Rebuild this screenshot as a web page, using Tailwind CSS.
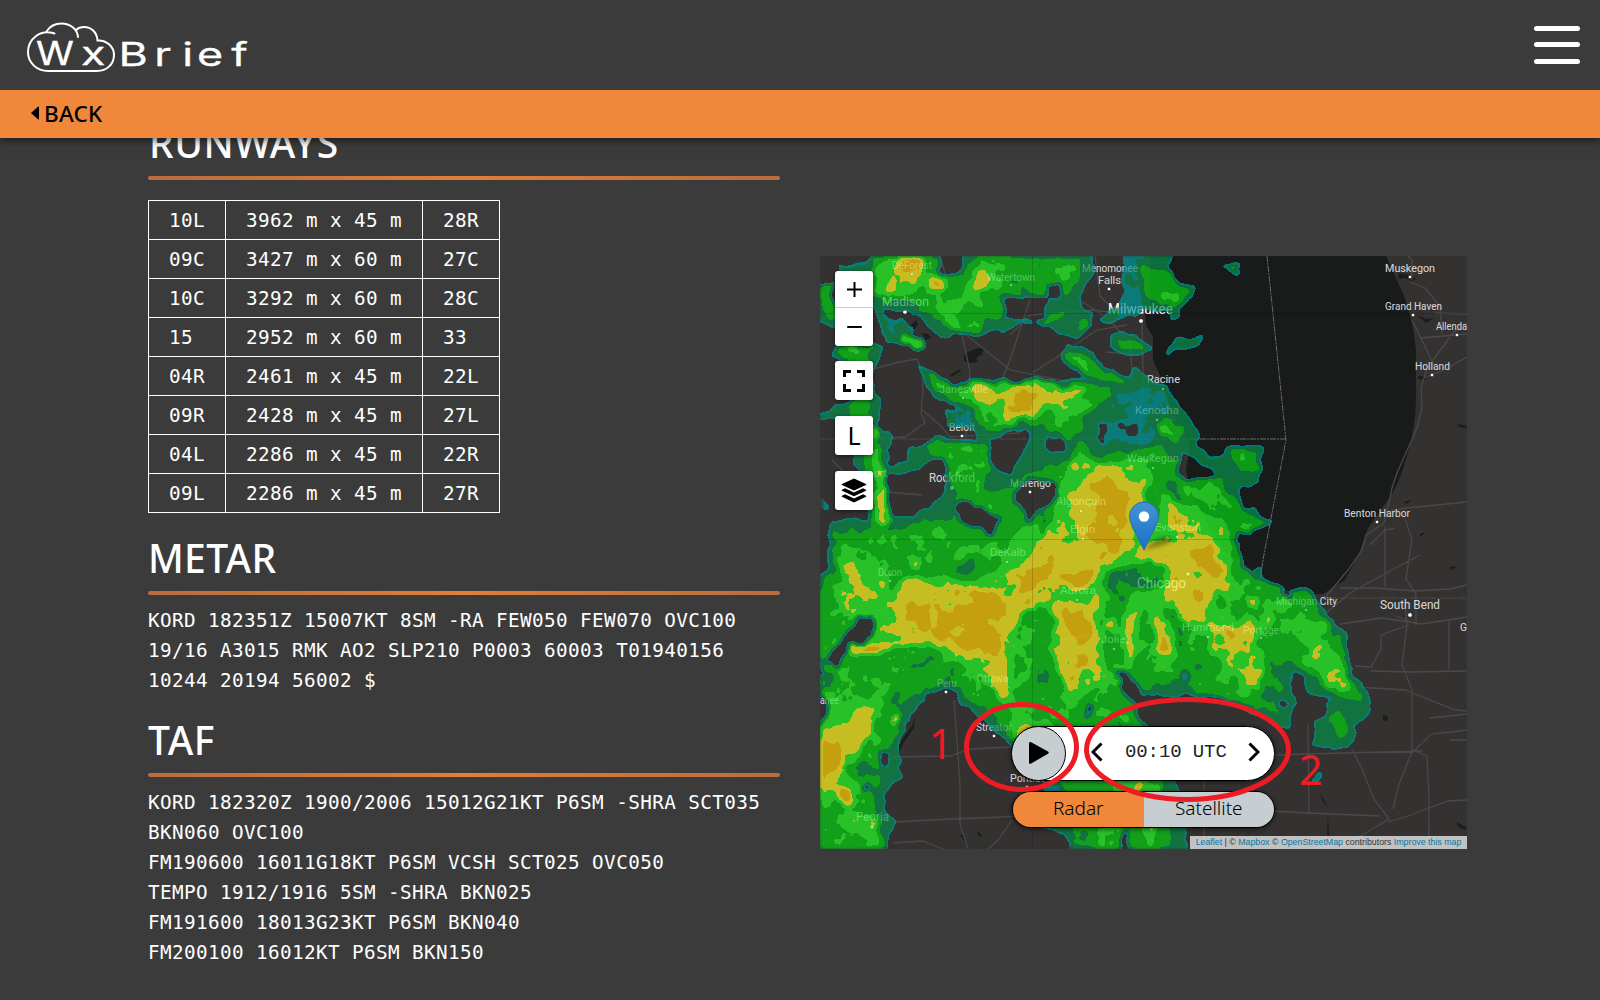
<!DOCTYPE html>
<html lang="en">
<head>
<meta charset="utf-8">
<title>WxBrief</title>
<script src="https://cdn.jsdelivr.net/npm/@tailwindcss/browser@4"></script>
</head>
<body class="h-[1000px] overflow-hidden bg-[#3b3b3b] font-['Noto_Sans',sans-serif] text-white flex flex-col">
<header class="relative z-10 shrink-0 shadow-[0_3px_8px_rgba(0,0,0,0.55)]">
  <div class="h-[90px] bg-[#3b3b3b] flex items-center justify-between pr-5">
    <svg width="260" height="90" viewBox="0 0 260 90" fill="none" stroke="#fff" stroke-width="2" stroke-linecap="round">
      <path d="M54.500 33.500C40 29 28 39 28 52C28 63 37 71 48 71H97C107 71 114 64 114 55C114 47 107 40 97.500 40.500C97 32 91 27 84 27C81 27 78 28 76 30M46.500 31.500C50 26 56 23.500 61.500 23.500C70 23.500 77.500 29 78 37"/>
      <g fill="#fff" stroke="#fff" stroke-width=".3" font-family="Inter, sans-serif" font-size="32">
        <text transform="translate(36 65) scale(1.2 1)" x="0">W</text>
        <text transform="translate(81 65) scale(1.4 1)" x="0">x</text>
        <text transform="translate(118.500 65.500) scale(1.4 1)" x="0 25.500 45.500 56 80.500">Brief</text>
      </g>
    </svg>
    <div class="flex flex-col gap-[11.500px] -mt-px">
      <span class="w-[46px] h-[5px] rounded-full bg-white"></span>
      <span class="w-[46px] h-[5px] rounded-full bg-white"></span>
      <span class="w-[46px] h-[5px] rounded-full bg-white"></span>
    </div>
  </div>
  <div class="h-12 bg-[#f0873a] text-black flex items-center gap-[5px] pl-[31px]">
    <svg width="8" height="14" viewBox="0 0 8 14" class="-mt-0.5"><path d="M8 .8V13.200Q7.500 13.600 7 13.200L.5 7.500Q0 7 .5 6.500L7 .8Q7.500 .4 8 .8Z"/></svg>
    <span class="text-[22.500px] font-medium tracking-[0.2px] leading-none">BACK</span>
  </div>
</header>

<main class="flex pl-[148px]">
  <section class="w-[632px] shrink-0">
    <h2 class="h-[38px] -mt-0.5 flex items-end text-[39px] font-medium leading-[56px] tracking-[0.5px]"><span class="h-[59px] pl-px">RUNWAYS</span></h2>
    <div class="mt-0.5 h-1 rounded-full bg-linear-to-r from-[#b86d3c] via-[#e27e38] to-[#b86d3c]"></div>
    <table class="mt-5 border-collapse font-['DejaVu_Sans_Mono',monospace] text-[19.300px] tracking-[0.390px] leading-[30px] [&_td]:border [&_td]:border-white [&_td]:px-5 [&_td]:pt-[5px] [&_td]:pb-[3px] [&_td]:h-[39px]">
      <tr><td>10L</td><td>3962 m x 45 m</td><td>28R</td></tr>
      <tr><td>09C</td><td>3427 m x 60 m</td><td>27C</td></tr>
      <tr><td>10C</td><td>3292 m x 60 m</td><td>28C</td></tr>
      <tr><td>15</td><td>2952 m x 60 m</td><td>33</td></tr>
      <tr><td>04R</td><td>2461 m x 45 m</td><td>22L</td></tr>
      <tr><td>09R</td><td>2428 m x 45 m</td><td>27L</td></tr>
      <tr><td>04L</td><td>2286 m x 45 m</td><td>22R</td></tr>
      <tr><td>09L</td><td>2286 m x 45 m</td><td>27R</td></tr>
    </table>
    <h2 class="mt-[18px] h-[60px] text-[39px] font-medium leading-[53px] tracking-[0.3px]">METAR</h2>
    <div class="h-1 rounded-full bg-linear-to-r from-[#b86d3c] via-[#e27e38] to-[#b86d3c]"></div>
    <p class="mt-[11px] font-['DejaVu_Sans_Mono',monospace] text-[19.300px] tracking-[0.395px] leading-[30px] whitespace-pre">KORD 182351Z 15007KT 8SM -RA FEW050 FEW070 OVC100
19/16 A3015 RMK AO2 SLP210 P0003 60003 T01940156
10244 20194 56002 $</p>
    <h2 class="mt-[17px] h-[60px] text-[39px] font-medium leading-[53px] tracking-[0.5px]">TAF</h2>
    <div class="h-1 rounded-full bg-linear-to-r from-[#b86d3c] via-[#e27e38] to-[#b86d3c]"></div>
    <p class="mt-[11px] font-['DejaVu_Sans_Mono',monospace] text-[19.300px] tracking-[0.395px] leading-[30px] whitespace-pre">KORD 182320Z 1900/2006 15012G21KT P6SM -SHRA SCT035
BKN060 OVC100
FM190600 16011G18KT P6SM VCSH SCT025 OVC050
TEMPO 1912/1916 5SM -SHRA BKN025
FM191600 18013G23KT P6SM BKN040
FM200100 16012KT P6SM BKN150</p>
  </section>

  <section class="relative ml-10 mt-[118px] w-[647px] h-[593px] shrink-0">
    <svg id="map" class="block" width="647" height="593" viewBox="820 256 647 593" font-family="Roboto, sans-serif">
      <defs>
        <filter id="radar" filterUnits="userSpaceOnUse" x="820" y="256" width="647" height="593" color-interpolation-filters="sRGB">
          <feTurbulence type="fractalNoise" baseFrequency=".07" numOctaves="3" seed="3" result="t"/>
          <feDisplacementMap in="SourceGraphic" in2="t" scale="14" xChannelSelector="R" yChannelSelector="G" result="d"/>
          <feGaussianBlur in="d" stdDeviation="2" result="h"/>
          <feTurbulence type="fractalNoise" baseFrequency=".055" numOctaves="3" seed="8"/>
          <feColorMatrix values="1 0 0 0 0 1 0 0 0 0 1 0 0 0 0 0 0 0 0 1" result="n"/>
          <feComposite in="h" in2="n" operator="arithmetic" k1=".36" k2=".82" k3=".05" k4="-.025" result="v"/>
          <feComponentTransfer in="v" result="c">
            <feFuncR type="discrete" tableValues="0 0 0 0 0 .04 .04 .04 .04 .04 .04 .15 .15 .15 .92 .92 .92 .91 .91 .91"/>
            <feFuncG type="discrete" tableValues=".56 .56 .56 .56 .56 .52 .52 .52 .74 .74 .74 .9 .9 .9 .88 .88 .88 .74 .74 .74"/>
            <feFuncB type="discrete" tableValues=".55 .55 .55 .55 .55 .27 .27 .27 .09 .09 .09 .15 .15 .15 .12 .12 .12 .04 .04 .04"/>
          </feComponentTransfer>
          <feColorMatrix in="v" values="0 0 0 0 0 0 0 0 0 0 0 0 0 0 0 1 0 0 0 0"/>
          <feComponentTransfer result="m"><feFuncA type="discrete" tableValues="0 0 0 1 1 1 1 1 1 1 1 1 1 1 1 1 1 1 1 1"/></feComponentTransfer>
          <feComposite in="c" in2="m" operator="in"/>
        </filter>
      </defs>
      <rect x="820" y="256" width="647" height="593" fill="#343231"/>
      <path fill="#191a1a" d="M1150 256V308L1145 315L1146 325L1153 337V360L1161 378L1176 420L1190 445L1186 470L1190 490L1205 520L1225 550L1242 562L1270 585L1300 595L1323 594L1345 580L1358 556L1368 528L1392 494Q1402 475 1405 462Q1411 445 1413 430Q1416 415 1416 400L1416 350Q1414 330 1410 315Q1406 298 1399 285L1386 256Z"/>
      <g fill="#1b1c1c">
        <path d="M964 355l6-4 8-3 6 1-3 6-5 3 2 4-8 1-6-2zM911 325l5-5 2 4-5 7zM922 333l6 1 3 4-5 2zM950 375l10-6 1 2-10 6zM1398 273l12 2 6 4-3 2-8-3-6 1zM1416 314l10 5 8-1-8 5zM1418 376l12 1-6 3-6-1zM1458 424l9 2-1 2-7-1zM1403 502l8-2-4 4zM1420 534l6-2-6 5zM1450 567l8-1-6 4zM1320 793l8 14-5-5zM1383 714l5 3-1 5-4-2zM1457 822l10 6-2 2-8-4zM896 752l6-12 10-14 3-10-1 12-10 14-6 12zM960 835l6 8-2-8zM978 831l5 6-6-2zM1328 815l1 24-2-6z"/>
      </g>
      <g fill="none" stroke="#4a4848" stroke-width="1.300">
        <path d="M870 370l25-7 22-4 5 12 1 20-2 22 4 10-20 14-40 2M922 410l18 15 10 12 70-4M940 256l20 70 10 45-5 80 20 60M1030 300l-20 60-10 25M960 330l50 40 60 12M1010 335l20-20 60-5 40 4M1080 300l30 20 20 24 3 40M1142 322l1 60-3 60 20 60M1095 256l5 40 20 20M1032 373l25-16 40-27 30-5M1106 352l38 3M890 757l60-1 20-7 42-2M954 700l4 56 2 28v40l8 25M893 822l58-3 30-1 40-2M1012 820l-14 20-10 9M893 843l30-2 20 8M1103 849v-30l40-10 80-2M1204 849v-70l-2-40M1274 755l33-1 115-3M1309 815l-1-90M1250 810l80 4 50 2M1352 749l10 20 12 30 15 20-20 12-32 18M1388 822l20-6 40-15 19-1M1412 750l15 6 2 40v53M1393 809l6-25 12-30 20-20 20-2 16-2M1412 750v-60l-10-25 5-40-2-20M1340 588h35l40 3 35-2 17-4M1340 624l42-6 40 6 45-7M1355 666l16 1 10-18 0-14 28-10M1371 671l40 1 56-1M1355 687l50 3 50 20 12 1M1449 619v50M1396 616l20 8v-30l-10-15 6-40-7-20M1320 618l30-25 40-22 30-16M1323 600l25-30 14-20 4-15 18-12 6-25 2-10 5-15 20-45 5-20-1-20 6-20 15-20 10-14 10-8 20-12M1424 378l20-8 23-13M1420 338l47-4M1412 320l22 45-5 5M1435 313l32 1M1412 280v-20l-4-4M1410 282l15 6 15 18 2 28M1386 512l20-4 61-6M1385 527v60M1370 545l15-15 10-2M1430 718l37-4M1450 740h17M832 460l30 30 60 5M935 665l80-20 120-15M1060 640l60-10 60-40M820 620l60-10 60 60"/>
      </g>
      <g fill="none" stroke="#686868" stroke-dasharray="6 1 2 1">
        <path d="M1267 256L1286 440L1263 560L1260 580M1190 439H1286" />
        <path d="M820 439H1190M1320 598H1467" stroke="#4a4a4a"/>
      </g>
      <g id="labels"></g>

      <g filter="url(#radar)" opacity=".8">
        <rect x="820" y="256" width="647" height="593" fill="#000"/>
        <g fill="#575757">
          <path d="M830 262L845 266L870 258L900 256H940L938 275L958 276L960 256H1094L1090 275L1083 290L1080 302L1094 314L1094 324L1080 335L1060 334L1036 322L1010 328L980 334L950 338L940 335L920 325L905 345L885 342L878 328L876 310L855 300L840 270Z"/>
          <path d="M820 288L835 280V330L820 320Z"/>
          <path d="M1124 250H1172V275L1196 290L1195 299L1180 308L1175 320L1168 313L1150 310L1140 305L1115 322L1100 319L1118 306L1122 290Z"/>
          <path d="M1108 345L1112 335L1135 334L1150 346L1140 356L1122 352Z"/>
          <path d="M1166 350L1180 337L1202 335V344L1190 347L1172 354Z"/>
          <path d="M1222 265L1233 259L1243 264L1237 276Z"/>
          <path d="M1056 353L1070 345L1085 350L1105 366L1135 380L1130 387L1105 384L1080 376L1062 362Z"/>
          <path d="M918 362L930 370L955 385L975 380L1000 378L1020 382L1033 377L1045 386L1070 378L1110 384L1130 378L1133 368L1150 378L1163 388L1174 390L1175 400L1190 418L1195 428L1201 438L1192 442L1210 456L1220 456L1225 445L1250 443L1263 447L1265 465L1262 478L1248 488V508L1256 506L1260 518L1276 524L1260 530L1240 532V545L1235 555L1250 573L1262 567L1265 577L1285 590L1310 588L1325 610L1343 635L1352 660L1356 675L1369 698V710L1362 720L1355 725L1352 742L1340 750L1310 747L1312 724L1330 703L1312 695L1302 675L1292 675L1300 704L1290 708V730L1265 722L1250 712L1225 700L1200 696H1130L1140 715L1150 728L1172 770L1176 800L1186 830L1188 855H1072L1065 835L1042 828L1060 800L1035 775L1012 747L1000 735L985 722L965 705L948 686L925 695L910 718L900 732V775L882 805L892 820V835L885 855H810V575L828 572L828 540L832 522L868 518L866 480L855 462L848 420L810 422V413L842 408L858 395L855 375L830 356L832 345H884L876 365L874 380L880 410L876 425L896 438L885 447L890 468L908 463L914 448L935 438L978 439L970 427L950 426L948 412L962 410L940 400L922 385Z"/>
          <path d="M1308 782l11-12 3 6-8 10zM820 495l7 10-2 5-5-5z"/>
        </g>
        <g fill="#3c3c3c">
          <path d="M1126 256h30l-10 20-5 40-24 4zM1110 395l40-10 20 10 0 20-30 4-30-10zM1100 420l50-6 10 20-10 16-50-4zM835 262l30 0-10 10zM880 312l20 6 10 25-22-8zM1290 680l6 30 8 6 4-8 12-2-20-20zM1040 785l30-5 0 12-20 6zM950 410l20 0 8 20-20 0z"/>
        </g>
        <g fill="#707070">
          <path d="M870 250H935L940 280L960 280L980 250H1085L1080 285L1060 300L1020 290L1010 320L950 332L930 312L905 300L880 300L876 280Z"/>
          <path d="M1135 262L1165 268L1190 292L1165 305L1145 296Z"/>
          <path d="M1235 500L1252 520L1235 540L1250 580L1310 594L1345 660L1364 700L1345 700L1330 690L1310 670L1285 660L1270 690L1282 715L1240 700L1200 680L1130 690L1160 770L1172 855H1080L1060 780L1012 735L950 680L905 700L895 740L870 800L888 855H810V590L835 570V530L880 530L950 520L960 490L1000 490L1060 460L1160 450L1220 480Z"/>
        </g>
        <g fill="#888888">
          <path d="M872 250H930L932 275L950 295L955 330L935 320L920 290L890 302L874 292Z"/>
          <path d="M925 270L960 275L985 250H1010L1012 275L985 310L985 325L955 333L935 310Z"/>
          <path d="M1045 262L1075 260L1078 278L1060 288L1040 275Z"/>
          <path d="M820 285L834 285V320L820 310ZM1040 320L1070 310L1065 322L1045 326ZM1078 322L1090 324L1085 330Z"/>
          <path d="M1148 278L1170 278L1190 293L1165 302L1150 295Z"/>
          <path d="M1120 340L1142 343L1140 348L1122 346ZM1060 353L1080 354L1105 372L1130 382L1105 380L1080 370ZM1228 264L1238 266L1234 270ZM1180 341L1195 342L1182 344Z"/>
          <path d="M835 347L875 345L865 365L872 430L885 530L874 530L862 440L848 405L866 395L860 370Z"/>
          <path d="M922 368L955 388L990 382L1040 385L1085 384L1110 390L1105 405L1080 415L1082 430L1070 440L1050 425L1020 422L990 430L975 410L950 398Z"/>
          <path d="M915 450L935 442L985 445L990 470L980 490L985 505L1000 490L990 520L965 500L955 485L945 460L925 450Z"/>
          <path d="M1160 418L1185 425L1180 440L1165 435ZM1230 448L1252 450L1260 470L1240 470Z"/>
          <path d="M1050 480L1070 460L1080 440L1100 462L1150 450L1165 465L1185 485L1225 490L1240 510L1268 524L1235 532L1232 560L1255 580L1290 592L1310 600L1340 640L1355 690L1345 700L1315 680L1290 650L1270 650L1268 690L1230 700L1195 690L1170 640L1160 660L1150 690L1120 670L1110 730L1145 760L1165 855H1100L1080 780L1012 730L965 690L950 655L935 670L895 680L880 720L870 780L882 855H810V600L838 580L832 550L850 530L880 535L950 525L1010 530L1045 515Z"/>
          <path d="M1330 718l10-5 8 14-10 8z"/>
        </g>
        <g fill="#aaaaaa">
          <path d="M880 262H925L918 285L900 298L878 292ZM925 275L945 272L948 288L930 290ZM965 285L980 258L990 275L1005 285L975 292ZM935 295L950 310L960 330L945 325Z"/>
          <path d="M905 335L925 345L922 350L905 342ZM845 345L860 345L862 355ZM1055 270L1070 275L1065 282Z"/>
          <path d="M960 392L1035 380L1085 388L1075 405L1040 415L1005 425L985 408Z"/>
          <path d="M876 430l6 30 8 60-8 10-6-60z"/>
          <path d="M1060 485L1080 462L1100 465L1150 458L1150 475L1145 500L1150 530L1165 500L1200 510L1225 520L1228 560L1240 600L1255 625L1262 660L1260 690L1230 670L1200 630L1190 610L1175 625L1175 675L1150 670L1145 620L1130 670L1095 680L1075 710L1055 690L1045 640L1030 600L1020 620L1010 690L1020 715L1000 700L975 670L940 650L900 640L870 655L840 650L830 690L830 710L860 695L880 700L860 750L850 790L810 810V710L825 690L830 660L860 650L875 625L850 610L835 600L845 560L870 560L890 590L905 580L950 575L1000 560L1020 530L1055 515Z"/>
          <path d="M1295 630L1320 640L1340 660L1355 690L1330 690L1305 650ZM1155 424l15 5 8 10-14-3zM1195 490l15-10 10 12-10 10zM845 810l25 5 10 20-20 5z"/>
          <path d="M1130 780l30 5 5 10-30 5zM1145 830l10 5-3 14zM1010 700l20 20 30 10-20 20-25-10zM1290 600l-8 10-10-3z"/>
        </g>
        <g fill="#858585">
          <path d="M1045 590l8 10 0 45 12 50-10 10-20-40-20-30 10-30zM1100 600l25-5 0 70-20 10zM1140 610l12 0 8 50-14 20-8-20zM1215 595l35 5 10 15-20 5-25-10zM835 660l30-5 40 5-10 20-35 10-20-10zM945 565l50-15 10 15-30 18-25 0zM1175 630l20-5 20 40-10 20-20-20z"/>
        </g>
        <g fill="#646464">
          <path d="M1105 572l18-6 30-4 10 10-6 16-20 4-14 14-12-14-12-8zM1164 608l8 0 10 22 4 16-8 0-8-22zM1182 650l16 4 6 20-10 16-12-10zM1034 655l8 0 8 20 0 20-16 0zM908 660l24-6 8 8-22 8-12 4zM940 566l20-4 14-8 14 6-14 12-24 4zM845 765l24-4 12 10-14 8-20-6zM1160 470l10 4 16 28-6 2-14-14zM820 670l14 2-4 20-10 0zM1270 650l12 0 0 40-10 10-10-15zM1042 512l8 8-4 14-8-6z"/>
        </g>
        <g fill="#c6c6c6">
          <path d="M898 250H926L920 283H898ZM880 290L895 282L897 294L884 296ZM928 278L943 276L942 288L930 286ZM978 270L985 268L988 285L974 292ZM907 338L920 345L918 348Z"/>
          <path d="M970 385L992 384L990 402L975 400ZM1000 396L1035 380L1045 392L1085 386L1070 398L1040 410L1032 418L1010 416Z"/>
          <path d="M1088 478L1100 465L1115 467L1140 487L1147 500L1128 510L1115 505L1135 530L1128 552L1110 562L1095 560L1082 540L1068 512L1075 490Z"/>
          <path d="M1122 465l24 0-5 4-16 0zM1070 460l5 2 5 16-5-2zM1168 508L1200 530L1220 552L1232 590L1215 588L1210 600L1208 620L1190 625L1175 600L1178 580L1160 562L1130 556L1150 540L1180 545Z"/>
          <path d="M1030 555L1050 535L1095 555L1098 575L1080 588L1058 590L1050 600L1020 615L1005 640L1002 665L1008 692L996 700L990 675L978 660L950 650L930 645L885 650L850 655L855 645L905 640L900 615L895 600L905 582L925 580L940 590L965 590L985 585L1005 590L1010 575Z"/>
          <path d="M1055 603L1096 605L1100 660L1085 665L1074 690L1066 685L1055 655L1062 645ZM1128 615L1133 612L1132 660L1125 650ZM1105 622h10l2 8-10 2zM1155 615L1165 630L1173 655L1163 658L1158 635Z"/>
          <path d="M1210 620L1252 630L1250 655L1238 655L1225 640L1215 635ZM1242 665L1262 668L1258 685L1244 682ZM1262 615h10l-5 10zM1310 648l5 1 0 6-5-1zM1327 661h4v4h-4zM1250 592l8 5-3 8-6-4z"/>
          <path d="M842 562L855 562L860 580L880 598L862 595L850 580ZM843 604L857 605L855 617L845 615ZM875 605l10 2-8 8zM908 560l8 0-3 10zM925 558l8-2 2 8z"/>
          <path d="M810 745L840 722L870 705L875 720L865 745L845 760L832 790L810 790ZM835 790L852 795L855 808L835 800ZM890 718l8-4 2 6-8 4zM868 821l6 0 0 8-5-2zM878 487l6 0 3 22-4 15-4-15zM875 428l5 0 2 10-6 2z"/>
          <path d="M1135 785l8 0 0 4-8 0zM1150 826l5 0 0 8zM1119 715l8 0-1 8-6 0z"/>
        </g>
        <g fill="#ececec">
          <path d="M905 260L922 260L918 272L903 270ZM1008 400L1032 388L1036 402L1028 414L1010 410ZM884 290L893 286L893 292ZM932 280L940 280L938 286Z"/>
          <path d="M1090 485L1108 475L1130 500L1120 530L1105 545L1090 535L1095 510ZM1108 535l12-6 4 14-8 14-10-8z"/>
          <path d="M1185 542L1210 552L1228 580L1205 570L1190 560ZM1190 590l14 6-6 16-8-8z"/>
          <path d="M1065 605L1090 625L1088 640L1075 640L1060 620ZM1070 665l20-10 2 8-18 8zM1162 630l6 10 2 12-6-6zM1225 625l12 8-4 6-10-6zM1248 672l8 2-4 6z"/>
          <path d="M905 600L945 610L990 595L1010 600L1000 625L998 660L975 650L940 640L935 615L925 632L905 620ZM960 590l30 0 15 15-30 5zM1040 560L1055 555L1050 580L1025 590L1010 600ZM1060 575l35-6-10 14-25 2z"/>
          <path d="M810 745L838 740L842 760L825 785L810 785ZM840 788l10 4-4 8-8-4zM860 645l30 0-2 4-28 3z"/>
        </g>
        <g fill="#000">
          <path d="M888 474L905 474L922 466L935 455L944 462L946 480L940 496L925 512L905 518L890 514L886 495Z"/>
          <path d="M990 443L1010 433L1029 431L1027 450L1018 466L1008 476L996 468Z"/>
          <path d="M1012 492L1030 480L1056 482L1060 494L1042 510L1030 519L1018 508Z"/>
          <path d="M958 506L970 500L985 510L998 520L994 534L980 530L960 522Z"/>
          <path d="M1045 446L1050 434L1064 438L1066 452L1052 455ZM1099 424h10l0 8-8 4zM1126 427h12v7h-10zM1119 422h5v6h-5zM1097 434h6v8h-6z"/>
          <path d="M1181 454L1195 457L1213 470L1214 480L1195 481L1181 476Z"/>
          <path d="M1005 298L1044 296L1050 302L1044 318L1030 322L1006 320ZM1050 283h10v16h-12zM882 314l25 8 25 20-5-20-20-12-25-2zM937 250h18v20l-12 4z"/>
          <path d="M846 632L860 616L873 620L872 634L847 650L835 668L826 660L840 642ZM810 690L828 700L826 720L810 722ZM820 660h5v12h-5zM866 782l6 4-2 6-6-4zM883 750l6 2 0 12-5-2z"/>
          <path d="M1114 673L1125 673L1139 692L1135 702L1123 690ZM1185 671l5 2-1 8-4-2zM1283 591h8l0 6-6 0zM1280 702l10 0-4 6-6-2zM1088 705l8 0-6 14-4-4zM1122 833l6-4-2 20-6 0zM1240 486l8 4 0 14-8 4 0-10z"/>
          <path d="M1293 672l8 2 12 22 18 0-2 14-12 12-6 28-16 0 2-36-6-20z"/>
        </g>
      </g>
      <g stroke="#000" stroke-opacity=".16"><path d="M1032.500 256V849M820 313.500H1467M820 539.500H1240"/></g>
      <use href="#labels" opacity=".17"/>
    </svg>

    <div class="absolute left-[15px] top-[15px] w-[38px] flex flex-col gap-4 text-black">
      <div class="h-[75px] bg-white rounded-[3px] shadow-[0_1px_4px_rgba(0,0,0,0.6)] flex flex-col items-center">
        <svg width="38" height="36" viewBox="0 0 38 36" stroke="#000" stroke-width="2"><path d="M12 18.500H27M19.500 11V26"/></svg>
        <svg width="38" height="38" viewBox="0 0 38 38" stroke="#000" stroke-width="2" class="border-t border-[#ccc]"><path d="M12 19.500H27"/></svg>
      </div>
      <div class="-mt-px h-[39px] bg-white rounded-[3px] shadow-[0_1px_4px_rgba(0,0,0,0.6)]">
        <svg width="38" height="39" viewBox="0 0 38 39" fill="none" stroke="#000" stroke-width="3"><path d="M9.500 16V10.500H16M22 10.500H28.500V16M28.500 23V29.500H22M16 29.500H9.500V23"/></svg>
      </div>
      <div class="h-[39px] bg-white rounded-[3px] shadow-[0_1px_4px_rgba(0,0,0,0.6)] flex items-center justify-center text-[25px] leading-none">L</div>
      <div class="h-[39px] bg-white rounded-[3px] shadow-[0_1px_4px_rgba(0,0,0,0.6)]">
        <svg width="38" height="39" viewBox="0 0 38 39"><path d="M19 7.500L31 13Q31.800 13.500 31 14L19 19.500L7 14Q6.200 13.500 7 13ZM10 17.300L19 21.500L28 17.300L31 18.700Q31.800 19.300 31 19.800L19 25.300L7 19.800Q6.200 19.300 7 18.700ZM10 23.300L19 27.500L28 23.300L31 24.700Q31.800 25.300 31 25.800L19 31.500L7 25.800Q6.200 25.300 7 24.700Z"/></svg>
      </div>
    </div>

    <svg class="absolute left-[309px] top-[244px]" width="50" height="52" viewBox="0 0 50 52">
      <defs><linearGradient id="pin" x2="0" y2="1"><stop stop-color="#4594d2"/><stop offset="1" stop-color="#1a6fc8"/></linearGradient>
      <filter id="soft"><feGaussianBlur stdDeviation="2"/></filter></defs>
      <path d="M15 50L24 42Q36 34 42 38Q44 42 34 45Z" fill="#000" opacity=".35" filter="url(#soft)"/>
      <path d="M15 50L2.500 24.500Q.5 20 .5 16.500A14.500 14.500 0 0 1 29.500 16.500Q29.500 20 27.500 24.500Z" fill="url(#pin)" stroke="#2a6ea8"/>
      <circle cx="15" cy="16.500" r="5.200" fill="#fff"/>
    </svg>

    <div class="absolute left-[191px] top-[470px] w-[264px] flex flex-col gap-2.5 text-black">
      <div class="h-[55px] rounded-full bg-white border border-black shadow-[0_1px_5px_rgba(0,0,0,0.65)] flex items-center">
        <div class="-ml-px size-[55px] shrink-0 rounded-full bg-[#c6ced1] border border-black flex items-center justify-center">
          <svg width="22" height="24" viewBox="0 0 22 24" class="-mt-0.5"><path d="M1 2.500Q1 .2 3.200 1.200L20 10.600Q21.500 11.700 20 12.800L3.200 22.600Q1 23.600 1 21.500Z"/></svg>
        </div>
        <svg class="ml-[25px] -mt-[3px]" width="12" height="20" viewBox="0 0 12 20" fill="none" stroke="#000" stroke-width="3"><path d="M10.500 1.500L2 10L10.500 18.500"/></svg>
        <span class="ml-[22px] -mt-0.5 w-[104px] font-['Liberation_Mono',monospace] text-[19px] tracking-[-0.1px] leading-none text-[#222] whitespace-nowrap">00:10 UTC</span>
        <svg class="ml-[19px] -mt-[3px]" width="12" height="20" viewBox="0 0 12 20" fill="none" stroke="#000" stroke-width="3"><path d="M1.500 1.500L10 10L1.500 18.500"/></svg>
      </div>
      <div class="ml-px h-[37px] rounded-full border border-black shadow-[0_1px_5px_rgba(0,0,0,0.65)] overflow-hidden flex text-[19px] font-light leading-[32px] text-center">
        <div class="flex-1 bg-[#f0873a]">Radar</div>
        <div class="flex-1 bg-[#c6ced1]">Satellite</div>
      </div>
    </div>

    <div class="absolute right-0 bottom-0 h-[13px] w-[277px] bg-white/70 text-[#333] font-['Liberation_Sans',sans-serif] text-[8.800px] leading-[12px] text-center whitespace-nowrap"><span class="text-[#0078a8]">Leaflet</span> | © <span class="text-[#0078a8]">Mapbox</span> © <span class="text-[#0078a8]">OpenStreetMap</span> contributors <span class="text-[#0078a8]">Improve this map</span></div>

    <svg class="absolute left-[100px] top-[430px]" width="420" height="130" viewBox="920 686 420 130" fill="none" stroke="#ed1c24" stroke-width="5">
      <ellipse cx="1021.500" cy="747" rx="55" ry="42.500"/>
      <ellipse cx="1187.500" cy="749.500" rx="101" ry="50"/>
      <g fill="#ed1c24" stroke="none" font-family="'Noto Sans', sans-serif" font-size="41">
        <text x="929" y="759">1</text><text x="1299" y="785">2</text>
      </g>
    </svg>
  </section>
</main>
<script>
// name, left x, baseline y, drawn width, font size, [dot x, dot y]
const places = [
  ["DeForest",892,269,40,10.5,912,274],["Watertown",987,281,48,10.5,1011,285],["Madison",882,306,47,13,905,312],
  ["Janesville",939,393,49,10.5,963,398],["Beloit",949,431,26,10.5,962,436],["Rockford",929,482,46,12,952,488],
  ["ort",874,477,13,10.5],["Marengo",1010,487,41,10.5,1030,492],["DeKalb",990,556,36,11,1007,562],
  ["Algonquin",1056,505,50,11,1081,511],["Elgin",1070,533,25,11,1083,539],["Evanston",1155,531,46,11,1177,537],
  ["Waukegan",1127,462,52,11,1153,468],["Kenosha",1135,414,44,11.5,1157,420],["Racine",1147,383,33,11,1163,389],
  ["Milwaukee",1108,314,65,14,1141,321],["Menomonee",1082,272,56,10.5],["Falls",1098,284,23,10.5,1109,289],
  ["Muskegon",1385,272,50,11,1410,277],["Grand Haven",1385,310,57,10.5,1413,315],["Allenda",1436,330,31,10.5,1457,335],
  ["Holland",1415,370,35,10.5,1432,375],["Benton Harbor",1344,517,66,10.5,1377,522],["Dixon",878,576,24,11,890,581],
  ["Peru",937,687,20,11,946,692],["Ottawa",977,682,31,10.5,992,686],["anee",820,704,19,10.5],["Streator",976,731,36,10.5,994,736],
  ["Pontiac",1010,782,36,10.5,1027,787],["Peoria",856,821,33,12,872,827],["Aurora",1060,594,36,11.5,1077,600],
  ["Chicago",1137,588,49,14,1188,574],["Joliet",1101,643,28,11.5,1114,649],["Hammond",1182,631,52,11,1208,637],
  ["Portage",1243,634,36,10.5,1261,638],["Michigan City",1276,605,61,10.5,1306,610],["South Bend",1380,609,60,12,1410,615],
  ["G",1460,631,7,10.5]
];
const NS = "http://www.w3.org/2000/svg";
const layer = document.getElementById("labels");
const add = (tag, attrs, text) => {
  const el = document.createElementNS(NS, tag);
  for (const k in attrs) el.setAttribute(k, attrs[k]);
  if (text) el.textContent = text;
  layer.appendChild(el);
};
for (const [name, x, y, w, size, cx, cy] of places) {
  add("text", { x, y, textLength: w, lengthAdjust: "spacingAndGlyphs", "font-size": size, fill: size > 12 ? "#ffffff" : "#d4d4d4" }, name);
  if (cx) add("circle", { cx, cy, r: size > 11.5 ? 2.3 : 1.8, fill: "#fff", stroke: "#111", "stroke-width": .6 });
}
</script>
</body>
</html>
